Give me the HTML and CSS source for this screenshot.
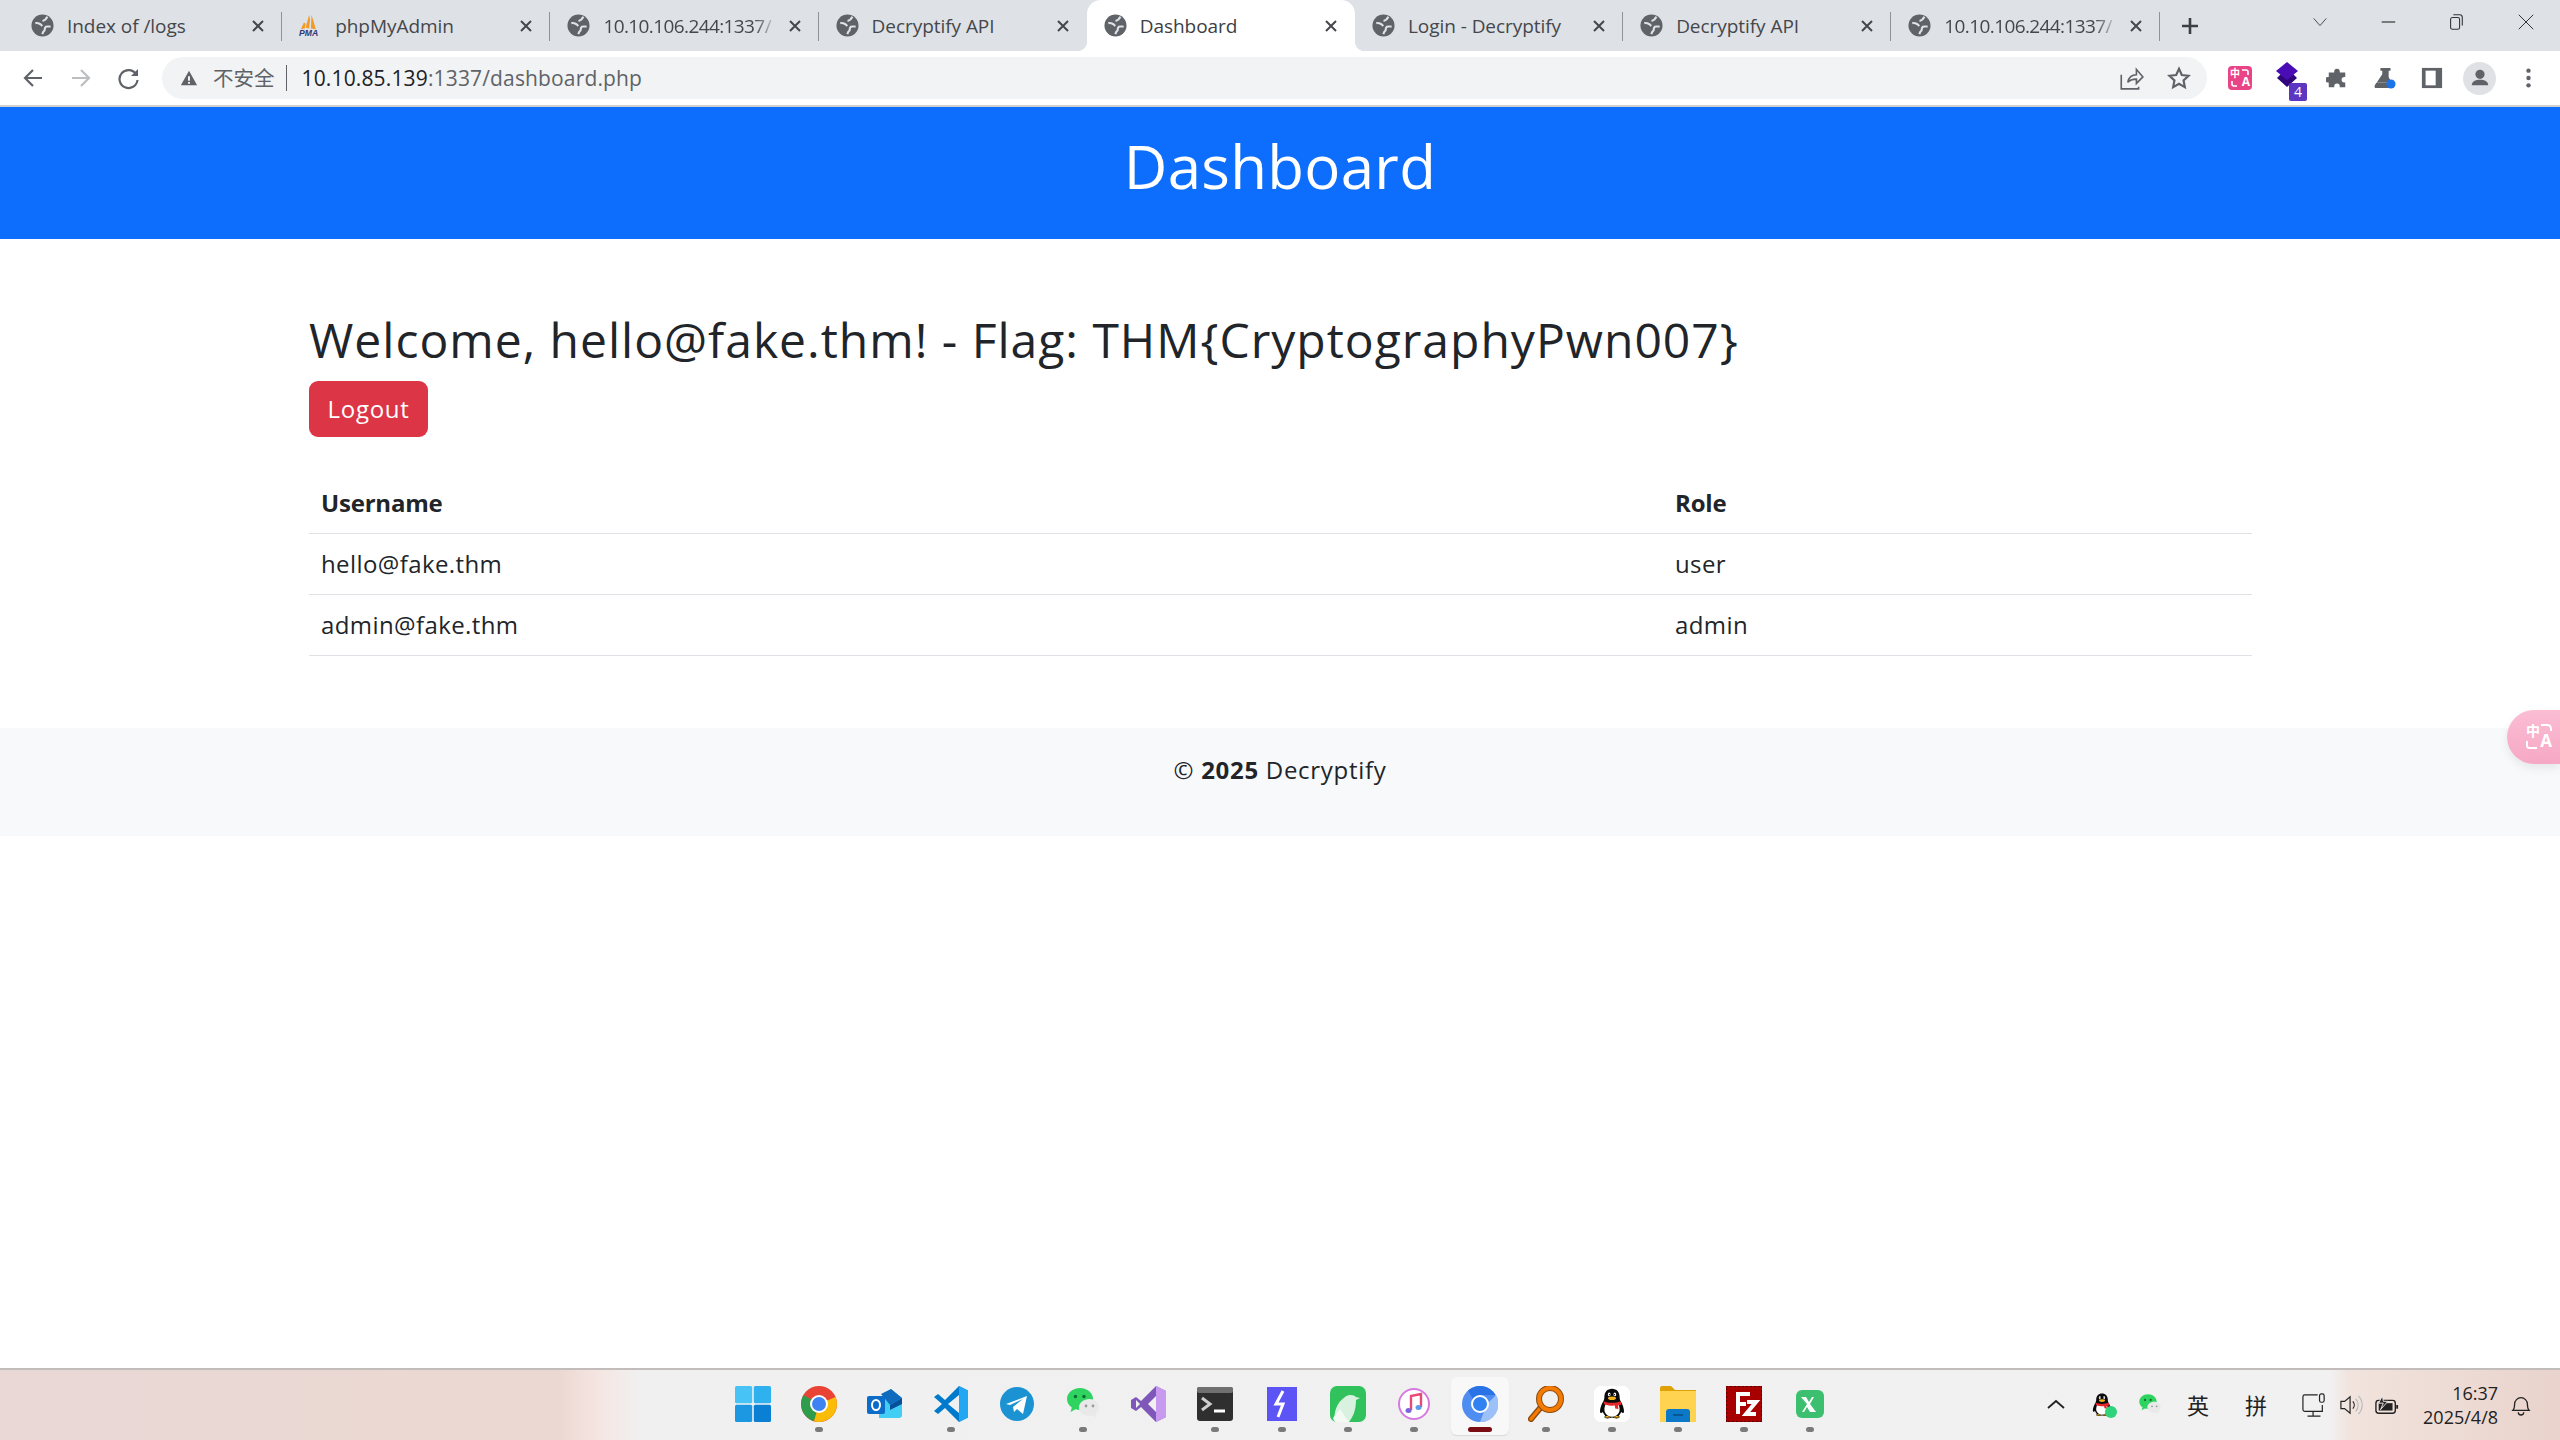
FILE: index.html
```html
<!DOCTYPE html>
<html lang="en">
<head>
<meta charset="utf-8">
<title>Dashboard</title>
<link rel="stylesheet" href="styles.css">
</head>
<body>
<svg class="defs" width="0" height="0" aria-hidden="true">
  <defs>
    <symbol id="globe" viewBox="0 0 24 24">
      <circle cx="12" cy="12" r="11.500" fill="#5f6368"/>
      <path d="M4.500 9.500c2.500-.6 4 .4 5.500 1.300l1.800 1.700M17 2.800c-1 2.500-2.500 4-5 4.500M20.500 13c-2 .3-3.500-.3-5 .3-1 .6-1.300 2.200-1.300 3.700-1.500 1-2 2.500-2.400 4" fill="none" stroke="#dee1e6" stroke-width="2.200"/>
    </symbol>
    <symbol id="x" viewBox="0 0 14 14">
      <path d="M2 2l10 10M12 2L2 12" stroke="#45474a" stroke-width="2" fill="none"/>
    </symbol>
    <symbol id="wechat" viewBox="0 0 36 36">
      <path d="M15 2C7.500 2 2 7 2 13c0 3.500 1.800 6.500 4.800 8.500L5.500 26l5-2.700c1.400.4 2.900.7 4.500.7 7.500 0 13-5 13-11S22.500 2 15 2z" fill="#2fd35f"/>
      <circle cx="10.500" cy="10.500" r="1.700" fill="#0f6b2f"/><circle cx="19" cy="10.500" r="1.700" fill="#0f6b2f"/>
      <path d="M24.500 13C18.500 13 14 17 14 21.500S18.500 30 24.500 30c1 0 2-.1 3-.4l3.500 2-.8-3.300c2.400-1.600 3.800-4 3.800-6.800C34 17 30.500 13 24.500 13z" fill="#e9e9e9"/>
      <circle cx="21" cy="20" r="1.400" fill="#9a9a9a"/><circle cx="28" cy="20" r="1.400" fill="#9a9a9a"/>
    </symbol>
    <symbol id="penguin" viewBox="0 0 36 40">
      <path d="M18 1c-6 0-9.500 4.500-9.500 10 0 2-.3 3.500-1 5C5 20 3 25 3 29c0 2.500 1.500 3 3.500 1 .7 2 1.800 3.500 3 4.700C8 36 8 38 12 38c3 0 4.500-1 6-1s3 1 6 1c4 0 4-2 2.500-3.300 1.200-1.200 2.300-2.700 3-4.700 2 2 3.500 1.500 3.500-1 0-4-2-9-4.500-13-.7-1.500-1-3-1-5C27.500 5.500 24 1 18 1z" fill="#0b0b0b"/>
      <path d="M10 20c-1.500 4-2 7-1 10 1.500 4 5 6 9 6s7.500-2 9-6c1-3 .5-6-1-10H10z" fill="#fff"/>
      <path d="M7 16.500c7 2.500 15 2.500 22 0l1 4c-2 .7-3.500 1-4.500 1.200l.5 4.500-4-.7-.5-3.500c-4 .3-7.500 0-13-1.500L7 16.500z" fill="#e5262b"/>
      <ellipse cx="18" cy="12.800" rx="5" ry="2.200" fill="#f6b51e"/>
      <ellipse cx="14.500" cy="8" rx="1.700" ry="2.400" fill="#fff"/><ellipse cx="21.500" cy="8" rx="1.700" ry="2.400" fill="#fff"/>
      <circle cx="15" cy="8.300" r=".9" fill="#000"/><circle cx="21" cy="8.300" r=".9" fill="#000"/>
      <path d="M9 36c2-1.500 5-1 7 1H9zM27 36c-2-1.500-5-1-7 1h7z" fill="#f6b51e"/>
    </symbol>
  </defs>
</svg>

<header class="tabstrip">
  <div class="tab sep">
    <svg class="fav"><use href="#globe"/></svg><span class="title">Index of /logs</span>
    <svg class="close"><use href="#x"/></svg>
  </div>
  <div class="tab sep">
    <svg class="fav" viewBox="0 0 24 24"><path d="M10.500 1L7 14l3.500 1 1-9-1-5zM13 1l-.5 14 5 1-2.500-9-2-6zM5 9l-3 7 4-1 1-5-2-1z" fill="#f29a23"/><text class="pma" x="0" y="23">PMA</text></svg><span class="title">phpMyAdmin</span>
    <svg class="close"><use href="#x"/></svg>
  </div>
  <div class="tab sep">
    <svg class="fav"><use href="#globe"/></svg><span class="title fade">10.10.106.244:1337/</span>
    <svg class="close"><use href="#x"/></svg>
  </div>
  <div class="tab">
    <svg class="fav"><use href="#globe"/></svg><span class="title">Decryptify API</span>
    <svg class="close"><use href="#x"/></svg>
  </div>
  <div class="tab active">
    <svg class="fav"><use href="#globe"/></svg><span class="title">Dashboard</span>
    <svg class="close"><use href="#x"/></svg>
  </div>
  <div class="tab sep">
    <svg class="fav"><use href="#globe"/></svg><span class="title">Login - Decryptify</span>
    <svg class="close"><use href="#x"/></svg>
  </div>
  <div class="tab sep">
    <svg class="fav"><use href="#globe"/></svg><span class="title">Decryptify API</span>
    <svg class="close"><use href="#x"/></svg>
  </div>
  <div class="tab sep">
    <svg class="fav"><use href="#globe"/></svg><span class="title fade">10.10.106.244:1337/</span>
    <svg class="close"><use href="#x"/></svg>
  </div>
  <svg class="newtab" viewBox="0 0 20 20"><path d="M10 2v16M2 10h16" stroke="#3c4043" stroke-width="2.600"/></svg>
  <div class="winctl">
    <svg class="wbtn chev" viewBox="0 0 20 20"><path d="M3 6l7 8 7-8" stroke="#3c3c3c" fill="none"/></svg>
    <svg class="wbtn min" viewBox="0 0 20 20"><path d="M3 10h15" stroke="#222" stroke-width="1.200"/></svg>
    <svg class="wbtn rest" viewBox="0 0 20 20"><rect x="4" y="5" width="10" height="13" rx="2" fill="none" stroke="#333" stroke-width="1.200"/><path d="M7 2h7a3 3 0 0 1 3 3v9" fill="none" stroke="#333" stroke-width="1.200"/></svg>
    <svg class="wbtn cls" viewBox="0 0 20 20"><path d="M2 2l16 16M18 2L2 18" stroke="#333" stroke-width="1.100"/></svg>
  </div>
</header>

<nav class="toolbar">
  <div class="navbtns">
    <svg class="nav" viewBox="0 0 24 24"><path d="M21 12H4M12 4l-8 8 8 8" fill="none" stroke="#5f6368" stroke-width="2.200"/></svg>
    <svg class="nav" viewBox="0 0 24 24"><path d="M3 12h17M12 4l8 8-8 8" fill="none" stroke="#bcbec1" stroke-width="2.200"/></svg>
    <svg class="nav" viewBox="0 0 24 24"><path d="M19 8a9 9 0 1 0 1.500 6" fill="none" stroke="#5f6368" stroke-width="2.200"/><path d="M21 3v7h-7z" fill="#5f6368"/></svg>
  </div>
  <div class="omnibox">
    <svg class="warn" viewBox="0 0 20 20"><path d="M10 2l9 16H1z" fill="#5f6368"/><path d="M9 8h2v5H9zM9 14.500h2v2H9z" fill="#fff"/></svg>
    <span class="insecure">不安全</span>
    <span class="url"><span class="host">10.10.85.139</span>:1337/dashboard.php</span>
    <div class="omni-end">
      <svg class="omni-ico" viewBox="0 0 24 24"><path d="M3 9v13h16v-2M9 16c1-5 4-7 8-7V4l6 7-6 6v-4c-3 0-6 .5-8 3z" fill="none" stroke="#5f6368" stroke-width="1.500"/></svg>
      <svg class="omni-ico" viewBox="0 0 24 24"><path d="M12 3.500l2.600 5.700 6.200.7-4.600 4.300 1.200 6.200-5.400-3.100-5.400 3.100 1.200-6.200-4.600-4.300 6.200-.7z" fill="none" stroke="#5f6368" stroke-width="2"/></svg>
    </div>
  </div>
  <div class="exts">
    <div class="ext-pink">
      <span class="zh">中</span><span class="en">A</span>
      <svg class="arcs" viewBox="0 0 24 24"><path d="M14 4h4q2 0 2 2v3M4 15v3q0 2 2 2h3" fill="none" stroke="#fff" stroke-width="1.600"/></svg>
    </div>
    <div class="ext-purple">
      <svg viewBox="0 0 26 30"><path d="M3 17l10 9 10-9-4-4H7z" fill="#31067d"/><path d="M13 1l11 9-11 9L2 10z" fill="#4a0cb4"/></svg>
      <span class="ext-badge">4</span>
    </div>
    <svg class="tool t-puzzle" viewBox="0 0 24 24"><path d="M9 5a3 3 0 0 1 6 0v1h6v5h-1a3 3 0 0 0 0 6h1v5h-6v-1a3 3 0 0 0-6 0v1H3v-5h-1a3 3 0 0 1 0-6h1V6h6z" fill="#5f6368"/></svg>
    <svg class="tool t-flask" viewBox="0 0 24 24"><path d="M7 1h11v3h-2v7l3 6H3l6-9V4H7z" fill="#5f6368"/><path d="M3 17h14v6H2c-2 0-2-3 1-6z" fill="#5f6368"/><circle cx="18.500" cy="18.500" r="5" fill="#1a73e8"/></svg>
    <svg class="tool t-panel" viewBox="0 0 24 24"><path d="M1 1h22v22H1z" fill="#5f6368"/><path d="M5 4h11v16H5z" fill="#fff"/></svg>
    <div class="avatar"><svg viewBox="0 0 24 24"><circle cx="12" cy="8" r="5" fill="#5f6368"/><path d="M3 20c0-4 4-6 9-6s9 2 9 6z" fill="#5f6368"/></svg></div>
    <svg class="tool menu" viewBox="0 0 6 24"><circle cx="3" cy="4" r="2.400" fill="#5f6368"/><circle cx="3" cy="12" r="2.400" fill="#5f6368"/><circle cx="3" cy="20" r="2.400" fill="#5f6368"/></svg>
  </div>
</nav>

<main class="page">
  <div class="hero"><h1>Dashboard</h1></div>
  <section class="container">
    <h2>Welcome, hello@fake.thm! - Flag: THM{CryptographyPwn007}</h2>
    <a class="btn" href="#">Logout</a>
    <table class="users">
      <thead><tr><th class="c1">Username</th><th>Role</th></tr></thead>
      <tbody>
        <tr><td>hello@fake.thm</td><td>user</td></tr>
        <tr><td>admin@fake.thm</td><td>admin</td></tr>
      </tbody>
    </table>
  </section>
  <footer class="foot"><p>© <strong>2025</strong> Decryptify</p></footer>
  <div class="translate">
    <span class="zh">中</span><span class="en">A</span>
    <svg class="arcs" viewBox="0 0 53 54"><path d="M34 15h6q4 0 4 4v2M20 31v5q0 2 3 2h7" fill="none" stroke="#fff" stroke-width="2"/></svg>
  </div>
</main>

<footer class="taskbar">
  <div class="apps">
    <div class="app"><svg viewBox="0 0 36 36"><rect x="0" y="0" width="17.200" height="17.200" rx="1.500" fill="#47c4f5"/><rect x="18.800" y="0" width="17.200" height="17.200" rx="1.500" fill="#2fb0ef"/><rect x="0" y="18.800" width="17.200" height="17.200" rx="1.500" fill="#1c97e2"/><rect x="18.800" y="18.800" width="17.200" height="17.200" rx="1.500" fill="#0a7fd4"/></svg></div>
    <div class="app run"><svg viewBox="0 0 36 36"><circle cx="18" cy="18" r="18" fill="#e94335"/><path d="M18 18L2.500 9A18 18 0 0 0 13 35.300z" fill="#2f9c4b"/><path d="M18 18l16.500-7A18 18 0 0 1 13 35.300z" fill="#fbbc05"/><circle cx="18" cy="18" r="9" fill="#fff"/><circle cx="18" cy="18" r="7" fill="#3f82f3"/></svg></div>
    <div class="app"><svg viewBox="0 0 36 36"><path d="M12 19L24 3l11 9v17a3 3 0 0 1-3 3H12z" fill="#41cdf4"/><path d="M14 8L24 3l11 9-12 7z" fill="#0f6cbd"/><path d="M23 19l12-7v6l-12 6z" fill="#06509a"/><rect x="0" y="10" width="18" height="18" rx="2" fill="#0b6cc9"/><ellipse cx="9" cy="19" rx="4" ry="5" fill="none" stroke="#fff" stroke-width="2"/></svg></div>
    <div class="app run"><svg viewBox="0 0 36 36"><path d="M26 0l9 4.500v27L26 36 12 22l-7 6-4-3 8-7-8-7 4-3 7 6z" fill="#007acc"/><path d="M26 0l9 4.500v27L26 36z" fill="#22a7f2"/><path d="M26 9L15 18l11 9z" fill="#f0f0f0"/></svg></div>
    <div class="app"><svg viewBox="0 0 36 36"><circle cx="18" cy="18" r="17" fill="#1b92d1"/><path d="M7 18L28 10l-4 18-6-5-3 3-1-5 10-8-13 6z" fill="#fff"/></svg></div>
    <div class="app run"><svg viewBox="0 0 36 36"><use href="#wechat"/></svg></div>
    <div class="app"><svg viewBox="0 0 36 36"><path d="M25 0l10 5v26l-10 5L10 21l-5 4-5-3V14l5-3 5 4z" fill="#7e57b8"/><path d="M25 0l10 5v26l-10 5z" fill="#c79af0"/><path d="M25 10l-8 8 8 8zM5 14v8l4-4z" fill="#f0f0f0"/></svg></div>
    <div class="app run"><svg viewBox="0 0 36 36"><rect y="1" width="36" height="34" rx="3" fill="#2f2f2f"/><rect y="1" width="36" height="6" rx="2" fill="#707070"/><path d="M5 12l8 6-8 6" fill="none" stroke="#cfcfcf" stroke-width="3"/><path d="M17 25h11" stroke="#fff" stroke-width="3"/></svg></div>
    <div class="app run"><svg viewBox="0 0 36 36"><rect x="3" y="1" width="30" height="34" fill="#5c54f5"/><path d="M19 5l-7 13h7l-5 13" fill="none" stroke="#fff" stroke-width="3"/></svg></div>
    <div class="app run"><svg viewBox="0 0 36 36"><rect width="36" height="36" rx="7" fill="#31c25d"/><path d="M5 36c-2-9 2-20 10-25 4-3 9-2 11 0l4 1-4 2c0 10-3 17-7 22z" fill="#d9f1df"/><path d="M3 32l7-9 9 13H7a5 5 0 0 1-4-4z" fill="#f2faf3"/></svg></div>
    <div class="app run"><svg viewBox="0 0 36 36"><circle cx="18" cy="18" r="15" fill="#fff" stroke="#d77ae0" stroke-width="2"/><path d="M15 24V10l10-2v13" fill="none" stroke="#e84a78" stroke-width="2.400"/><ellipse cx="12.500" cy="24.500" rx="3" ry="2.500" fill="#7d63d8"/><ellipse cx="22.500" cy="21.500" rx="3" ry="2.500" fill="#5f9be8"/></svg></div>
    <div class="app current"><svg viewBox="0 0 36 36"><circle cx="18" cy="18" r="18" fill="#4f8ef0"/><path d="M18 9h15.500A18 18 0 0 0 6 4.500L12 15z" fill="#2a73e6"/><path d="M25 18l-7 18A18 18 0 0 0 34 9z" fill="#9cc0f8"/><circle cx="18" cy="18" r="8" fill="#3181f0" stroke="#fff" stroke-width="2"/></svg></div>
    <div class="app run"><svg viewBox="0 0 36 36"><path d="M13 21L3 33" stroke="#8a4a10" stroke-width="6" stroke-linecap="round"/><path d="M13 21L3 33" stroke="#f47a00" stroke-width="3.500" stroke-linecap="round"/><circle cx="22" cy="13" r="11" fill="none" stroke="#8a4a10" stroke-width="6"/><circle cx="22" cy="13" r="11" fill="none" stroke="#f47a00" stroke-width="4"/></svg></div>
    <div class="app run"><div class="qq-box"><svg viewBox="0 0 36 40"><use href="#penguin"/></svg></div></div>
    <div class="app run"><svg viewBox="0 0 36 36"><path d="M0 2a2 2 0 0 1 2-2h9l4 4h21v6H0z" fill="#e0a106"/><path d="M0 5h36v31H0z" fill="#ffd24f"/><path d="M6 26a3 3 0 0 1 3-3h18a3 3 0 0 1 3 3v10H6z" fill="#0c79c8"/><path d="M13 29h10" stroke="#074d85" stroke-width="1.500"/></svg></div>
    <div class="app run"><svg viewBox="0 0 36 36"><rect width="36" height="36" fill="#a80000"/><rect width="36" height="36" fill="none" stroke="#5a0000" stroke-width="2" stroke-dasharray="2 2"/><path d="M12 28V8h12M11 18h9M21 16h9L20 28h10" fill="none" stroke="#fff" stroke-width="4"/></svg></div>
    <div class="app run"><svg viewBox="0 0 36 36"><rect x="4" y="4" width="28" height="28" rx="6" fill="#3cc070"/><path d="M9 11h5l3 5 3-5h2l-4 7 6 8h-6l-3-5-3 5H10l5-8z" fill="#fff"/></svg></div>
  </div>
  <div class="tray">
    <svg class="tr-chev" viewBox="0 0 18 10"><path d="M1 9l8-7 8 7" fill="none" stroke="#222" stroke-width="1.800"/></svg>
    <div class="tr-qq"><svg viewBox="0 0 36 40"><use href="#penguin"/></svg><i class="qq-dot"></i></div>
    <svg class="tr-we" viewBox="0 0 36 36"><use href="#wechat"/></svg>
    <span class="ime ime1">英</span>
    <span class="ime ime2">拼</span>
    <svg class="tr-mon" viewBox="0 0 26 28"><path d="M17 3H3a2 2 0 0 0-2 2v14a2 2 0 0 0 2 2h19v-7M12 21v5M6 26h14" fill="none" stroke="#222" stroke-width="1.300"/><rect x="19" y="2" width="5" height="9" rx="2" fill="none" stroke="#222" stroke-width="1.300"/></svg>
    <svg class="tr-vol" viewBox="0 0 26 24"><path d="M2 8h4l6-5v18l-6-5H2z" fill="none" stroke="#222" stroke-width="1.300"/><path d="M15 8a6 6 0 0 1 0 8" fill="none" stroke="#222" stroke-width="1.300"/><path d="M18 5a10 10 0 0 1 0 14M21 2a14 14 0 0 1 0 20" fill="none" stroke="#bbb" stroke-width="1.300"/></svg>
    <svg class="tr-bat" viewBox="0 0 26 22"><rect x="1" y="6" width="21" height="14" rx="3" fill="none" stroke="#222" stroke-width="1.500"/><path d="M4 9h15v8H4z" fill="#222"/><path d="M23 11h2v4h-2z" fill="#222"/><path d="M8 1L4 9h5l-3 7 8-9H9z" fill="#222" stroke="#f1ece9" stroke-width="1"/></svg>
    <div class="clock"><span>16:37</span><span>2025/4/8</span></div>
    <svg class="tr-bell" viewBox="0 0 22 24"><path d="M2 18c2-2 2-4 2-7a7 7 0 0 1 14 0c0 3 0 5 2 7z" fill="none" stroke="#222" stroke-width="1.400"/><path d="M8 20a3 3 0 0 0 6 0" fill="none" stroke="#222" stroke-width="1.400"/></svg>
  </div>
</footer>
</body>
</html>
```

FILE: styles.css
```css
* { box-sizing: border-box; }
html, body { margin: 0; height: 100%; }
body {
  display: flex;
  flex-direction: column;
  height: 1440px;
  overflow: hidden;
  background: #fff;
  color: #212529;
  font-family: "Open Sans", "Noto Sans CJK SC", sans-serif;
}
.defs { display: block; height: 0; }

/* tab strip */
.tabstrip {
  display: flex;
  align-items: stretch;
  height: 51px;
  flex: none;
  padding-left: 14px;
  background: #dee1e6;
}
.tab {
  position: relative;
  display: flex;
  align-items: center;
  width: 268.2px;
  flex: none;
  padding: 0 17px 0 17px;
  font-size: 19px;
  color: #45474a;
}
.tab.sep::after {
  content: "";
  position: absolute;
  right: 0;
  top: 12px;
  height: 29px;
  width: 1px;
  background: #8f9296;
}
.tab.active {
  background: #fff;
  border-radius: 14px 14px 0 0;
  color: #3c4043;
}
.tab.active::before, .tab.active::after {
  content: "";
  position: absolute;
  bottom: 0;
  width: 10px;
  height: 10px;
}
.tab.active::before { left: -10px; background: radial-gradient(circle at 0 0, transparent 10px, #fff 10.500px); }
.tab.active::after { right: -10px; background: radial-gradient(circle at 100% 0, transparent 10px, #fff 10.500px); }
.fav { width: 23px; height: 23px; flex: none; margin-right: 13px; }
.pma { font: italic 700 9px "Liberation Sans", sans-serif; fill: #2b3a77; }
.title { flex: 1; min-width: 0; white-space: nowrap; overflow: hidden; letter-spacing: -0.05px; }
.title.fade {
  letter-spacing: -0.6px;
  -webkit-mask-image: linear-gradient(90deg, #000 86%, transparent 100%);
  mask-image: linear-gradient(90deg, #000 86%, transparent 100%);
}
.close { width: 14px; height: 14px; flex: none; margin-left: 10px; }
.newtab { width: 20px; height: 20px; flex: none; margin: 16px 0 0 20px; }
.winctl { display: flex; margin-left: 111px; }
.wbtn { flex: none; }
.chev { width: 18px; height: 18px; margin: 13px 50px 0 0; }
.min { width: 18px; height: 18px; margin: 13px 50px 0 0; }
.rest { width: 18px; height: 20px; margin: 12px 52px 0 0; }
.cls { width: 18px; height: 18px; margin: 13px 0 0 0; }

/* toolbar */
.toolbar {
  display: flex;
  align-items: center;
  height: 56px;
  flex: none;
  padding: 0 0 0 21px;
  background: #fff;
  border-bottom: 2px solid #cfd0d2;
}
.navbtns { display: flex; gap: 24px; width: 141px; flex: none; }
.nav { width: 24px; height: 24px; flex: none; }
.omnibox {
  display: flex;
  align-items: center;
  width: 2045px;
  height: 42px;
  flex: none;
  padding: 0 15px 0 18px;
  background: #f1f3f4;
  border-radius: 21px;
}
.warn { width: 18px; height: 18px; flex: none; margin-right: 15px; }
.insecure {
  padding-right: 11px;
  border-right: 1px solid #5f6368;
  font-size: 20.500px;
  line-height: 26px;
  color: #5f6368;
}
.url { margin-left: 15px; font-size: 21px; color: #5f6368; letter-spacing: 0.15px; white-space: nowrap; }
.host { color: #202124; }
.omni-end { display: flex; gap: 22px; margin-left: auto; }
.omni-ico { width: 26px; height: 26px; flex: none; }
.exts { display: flex; align-items: center; flex: none; margin-left: 21px; }
.ext-pink {
  position: relative;
  width: 24px;
  height: 24px;
  flex: none;
  border-radius: 4px;
  background: #e94486;
  color: #fff;
  font-weight: 700;
  line-height: 1;
}
.zh { position: absolute; left: 2px; top: 2px; font-size: 10px; }
.en { position: absolute; right: 2px; bottom: 2px; font-size: 12px; }
.arcs { position: absolute; inset: 0; width: 100%; height: 100%; }
.ext-purple { position: relative; width: 30px; height: 34px; flex: none; margin-left: 22px; }
.ext-purple svg { width: 26px; height: 30px; display: block; }
.ext-badge {
  position: absolute;
  right: -3px;
  bottom: -6px;
  width: 18px;
  height: 18px;
  border-radius: 2px;
  background: #5c35c0;
  color: #fff;
  font-size: 14px;
  line-height: 18px;
  text-align: center;
}
.tool { width: 22px; height: 22px; flex: none; margin-left: 24px; }
.t-puzzle { margin-left: 22px; }
.t-flask { margin-left: 26px; }
.t-panel { margin-left: 25px; }
.avatar {
  display: flex;
  width: 33px;
  height: 33px;
  flex: none;
  margin-left: 20px;
  align-items: center;
  justify-content: center;
  border-radius: 50%;
  background: #dfe1e5;
}
.avatar svg { width: 22px; height: 22px; }
.tool.menu { width: 7px; margin-left: 29px; }

/* page */
.page { position: relative; flex: 1; min-height: 0; overflow: hidden; }
.hero { padding: 23px 0 25px; background: #0d6efd; color: #fff; text-align: center; }
.hero h1 {
  margin: 0 0 12px;
  font-size: 60px;
  font-weight: 400;
  line-height: 72px;
  letter-spacing: 0.3px;
}
.container { margin: 72px 308px 72px 309px; }
.container h2 {
  margin: 0 0 12px;
  font-size: 48px;
  font-weight: 400;
  line-height: 57.600px;
  letter-spacing: 1px;
  white-space: nowrap;
}
.btn {
  display: inline-block;
  width: 119px;
  height: 56px;
  border-radius: 9px;
  background: #dc3545;
  color: #fff;
  font-size: 24px;
  line-height: 56px;
  text-align: center;
  text-decoration: none;
  letter-spacing: 0.7px;
}
.users {
  width: 100%;
  margin-top: 36px;
  border-collapse: collapse;
  font-size: 24px;
  line-height: 36px;
  table-layout: fixed;
}
.users th, .users td {
  padding: 12px;
  border-bottom: 1.500px solid #dee2e6;
  font-size: 24px;
  text-align: left;
  letter-spacing: 0.4px;
}
.users th { font-weight: 700; letter-spacing: -0.2px; }
.c1 { width: 1354px; }
.foot { padding: 24px 0; background: #f8f9fa; text-align: center; font-size: 24px; line-height: 36px; letter-spacing: 0.7px; }
.foot p { margin: 0 0 24px; }
.translate {
  position: absolute;
  top: 603px;
  right: 0;
  width: 53px;
  height: 54px;
  border-radius: 27px 0 0 27px;
  background: linear-gradient(180deg, #fbbdd4, #f6a8c4);
  color: #fff;
  font-weight: 700;
  line-height: 1;
  box-shadow: 0 4px 10px rgba(0,0,0,.08);
}
.translate .zh { left: 19px; top: 14px; font-size: 14px; }
.translate .en { right: 8px; bottom: 15px; font-size: 17px; }

/* taskbar */
.taskbar {
  position: relative;
  display: flex;
  justify-content: center;
  height: 72px;
  flex: none;
  border-top: 2px solid #c2bdba;
  background: linear-gradient(90deg, #e9d8d6 0, #ecd8d2 560px, #f5e6e2 600px, #f0f0f0 640px, #f1f1f1 2330px, #f1e3dd 2350px, #e9d3cc 2560px);
}
.apps { display: flex; padding-top: 16px; padding-left: 3px; gap: 30.100px; }
.app { position: relative; width: 36px; height: 36px; flex: none; }
.app svg { display: block; width: 36px; height: 36px; }
.app.run::after, .app.current::after {
  content: "";
  position: absolute;
  left: 50%;
  bottom: -10px;
  width: 8px;
  height: 5px;
  margin-left: -4px;
  border-radius: 3px;
  background: #7a7a7a;
}
.app.current::before {
  content: "";
  position: absolute;
  inset: -9px -11px -13px;
  z-index: 0;
  border-radius: 6px;
  background: #f8f8f8;
  box-shadow: 0 1px 1px rgba(0,0,0,.1);
}
.app.current svg { position: relative; }
.app.current::after { width: 24px; margin-left: -12px; background: #7a0c14; }
.qq-box { width: 36px; height: 36px; padding: 2px; border-radius: 7px; background: #fff; }
.qq-box svg { width: 32px; height: 32px; }

.tray { position: absolute; left: 2047px; top: 0; bottom: 0; display: flex; align-items: center; }
.tr-chev { width: 18px; height: 10px; flex: none; margin: 0 0 2px 0; }
.tr-qq { position: relative; width: 22px; height: 26px; flex: none; margin-left: 26px; }
.tr-qq svg { width: 22px; height: 26px; display: block; }
.qq-dot { position: absolute; right: -4px; bottom: 0; width: 12px; height: 12px; border-radius: 50%; background: #2fd37a; }
.tr-we { width: 24px; height: 24px; flex: none; margin-left: 25px; }
.ime { flex: none; font-size: 22px; line-height: 30px; color: #222; }
.ime1 { margin-left: 25px; }
.ime2 { margin-left: 36px; }
.tr-mon { width: 24px; height: 26px; flex: none; margin-left: 35px; }
.tr-vol { width: 24px; height: 22px; flex: none; margin-left: 13px; }
.tr-bat { width: 24px; height: 22px; flex: none; margin-left: 12px; }
.clock {
  display: flex;
  flex-direction: column;
  width: 96px;
  flex: none;
  margin-left: 3px;
  align-items: flex-end;
  font-size: 18px;
  line-height: 24px;
  color: #222;
}
.tr-bell { width: 20px; height: 24px; flex: none; margin-left: 13px; }
```
